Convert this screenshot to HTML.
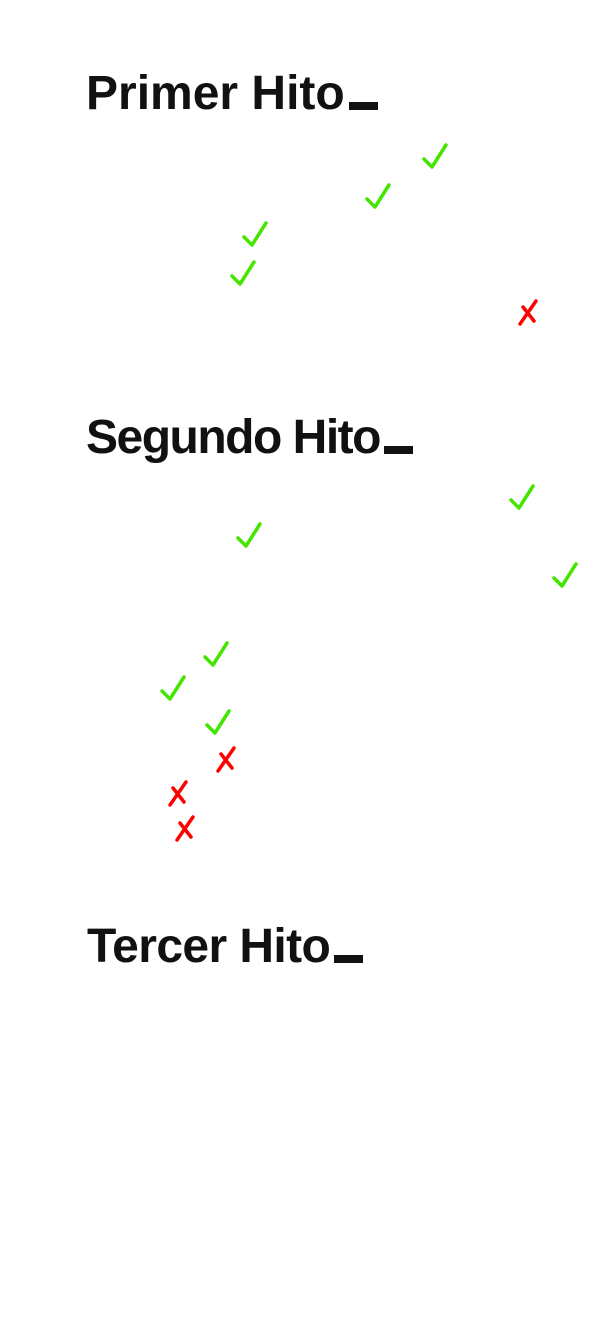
<!DOCTYPE html>
<html><head><style>
body{margin:0;width:600px;height:1334px;background:#fff;position:relative;overflow:hidden}
h1{position:absolute;left:86px;margin:0;font:bold 48px/1 "Liberation Sans",sans-serif;color:#111;letter-spacing:-0.5px;white-space:nowrap}
h1 span{display:inline-block;width:29px;height:8px;background:#111;margin-left:4px;vertical-align:-1px}
svg{position:absolute;width:24px;height:26px;overflow:visible}
.c path{stroke:#44e600;stroke-width:3.5;fill:none;stroke-linecap:round;stroke-linejoin:round}
.x path{stroke:#f00;stroke-width:3.5;fill:none;stroke-linecap:round}
</style></head><body>
<h1 style="top:70px;letter-spacing:0px">Primer Hito<span></span></h1>
<h1 style="top:414px;letter-spacing:-1.5px">Segundo Hito<span></span></h1>
<h1 style="top:923px;left:87px;letter-spacing:-0.6px">Tercer Hito<span></span></h1>

<svg class="c" style="left:423px;top:144px"><path d="M1,15 L9,23 L23,1"/></svg>
<svg class="c" style="left:366px;top:184px"><path d="M1,15 L9,23 L23,1"/></svg>
<svg class="c" style="left:243px;top:222px"><path d="M1,15 L9,23 L23,1"/></svg>
<svg class="c" style="left:231px;top:261px"><path d="M1,15 L9,23 L23,1"/></svg>
<svg class="x" style="left:516px;top:300px"><path d="M20,1 L4,24 M7,7 L18,21"/></svg>

<svg class="c" style="left:510px;top:485px"><path d="M1,15 L9,23 L23,1"/></svg>
<svg class="c" style="left:237px;top:523px"><path d="M1,15 L9,23 L23,1"/></svg>
<svg class="c" style="left:553px;top:563px"><path d="M1,15 L9,23 L23,1"/></svg>
<svg class="c" style="left:204px;top:642px"><path d="M1,15 L9,23 L23,1"/></svg>
<svg class="c" style="left:161px;top:676px"><path d="M1,15 L9,23 L23,1"/></svg>
<svg class="c" style="left:206px;top:710px"><path d="M1,15 L9,23 L23,1"/></svg>
<svg class="x" style="left:214px;top:747px"><path d="M20,1 L4,24 M7,7 L18,21"/></svg>
<svg class="x" style="left:166px;top:781px"><path d="M20,1 L4,24 M7,7 L18,21"/></svg>
<svg class="x" style="left:173px;top:816px"><path d="M20,1 L4,24 M7,7 L18,21"/></svg>
</body></html>
